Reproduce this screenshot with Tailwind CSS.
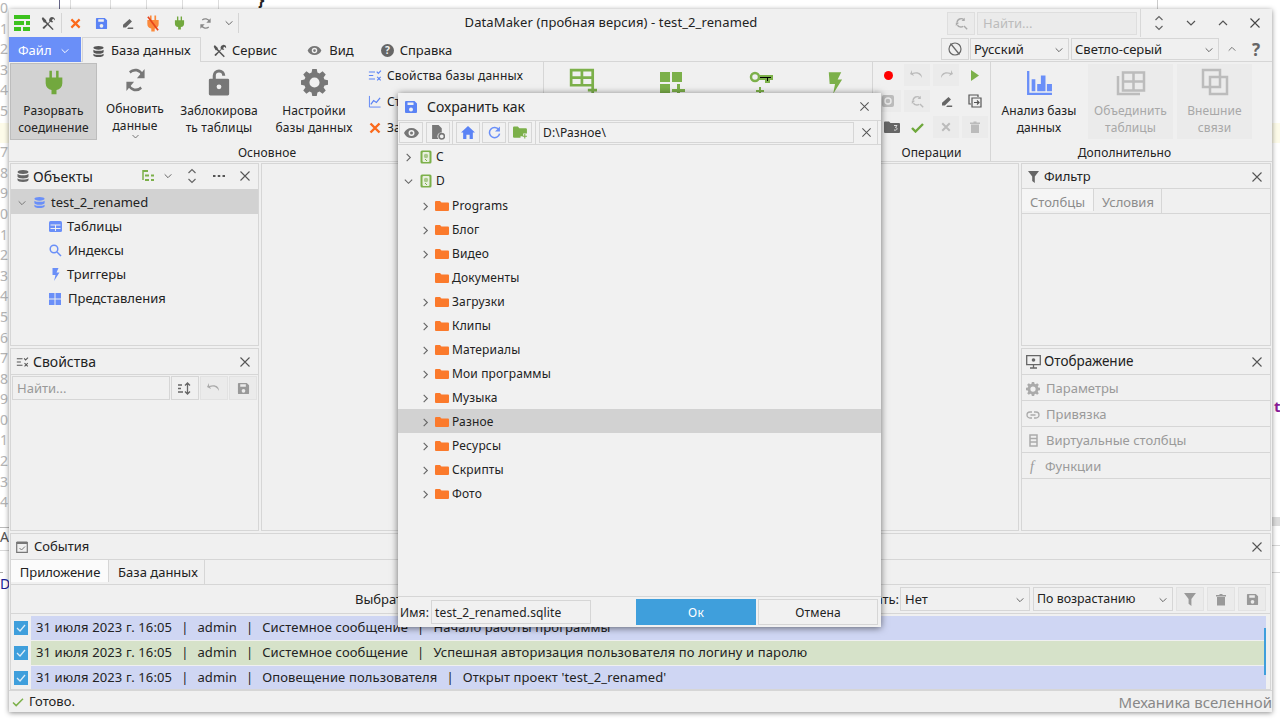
<!DOCTYPE html>
<html lang="en">
<head>
    <meta charset="UTF-8">
    <title>DataMaker</title>
    <script src="https://cdn.jsdelivr.net/npm/@tailwindcss/browser@4"></script>
</head>
<body class="w-[1280px] h-[720px] overflow-hidden bg-white relative font-['Noto_Sans',sans-serif] text-[13px] text-[#222]">

    <!-- icon sprites -->
    <svg class="hidden">
        <symbol id="x" viewBox="0 0 12 12"><path d="M1.500 1.500l9 9M10.500 1.500l-9 9" stroke="currentColor" stroke-width="1.100" fill="none"/></symbol>
        <symbol id="down" viewBox="0 0 12 12"><path d="M2 4l4 4 4-4" stroke="currentColor" stroke-width="1.200" fill="none"/></symbol>
        <symbol id="right" viewBox="0 0 12 12"><path d="M4 2l4 4-4 4" stroke="currentColor" stroke-width="1.200" fill="none"/></symbol>
        <symbol id="up" viewBox="0 0 12 12"><path d="M2 8l4-4 4 4" stroke="currentColor" stroke-width="1.200" fill="none"/></symbol>
        <symbol id="updown" viewBox="0 0 12 18"><path d="M2.500 6l3.500-3.500 3.500 3.500M2.500 12l3.500 3.500 3.500-3.500" stroke="currentColor" stroke-width="1.200" fill="none"/></symbol>
        <symbol id="save" viewBox="0 0 14 14"><path fill="currentColor" fill-rule="evenodd" d="M1 2a1 1 0 0 1 1-1h8.500L13 3.500V12a1 1 0 0 1-1 1H2a1 1 0 0 1-1-1zM3.500 2.500V5h6V2.500zM7 7.500a2 2 0 1 0 0 4 2 2 0 0 0 0-4z"/></symbol>
        <symbol id="db" viewBox="0 0 14 14"><path fill="currentColor" d="M7 1c3 0 5.500.8 5.500 2S10 5 7 5 1.500 4.200 1.500 3 4 1 7 1zM1.500 5c1 1 3 1.300 5.500 1.300S11.500 6 12.500 5v2.500C12.500 8.700 10 9.500 7 9.500s-5.500-.8-5.500-2zM1.500 9.300c1 1 3 1.300 5.500 1.300s4.500-.3 5.500-1.300V11c0 1.200-2.500 2-5.500 2s-5.500-.8-5.500-2z"/></symbol>
        <symbol id="tools" viewBox="0 0 16 16"><path fill="currentColor" d="M2 1l3.500 3.500v1.200L13.500 14 12.300 15 4.300 7H3L0.800 3zM11.500 1a3.500 3.500 0 0 1 3.500 3.800L13 3 11.500 4.500 13 6.500a3.500 3.500 0 0 1-3-.4L3.500 13.500a1.200 1.200 0 0 1-1.600-1.600L9 6a3.500 3.500 0 0 1 2.500-5z"/></symbol>
        <symbol id="plug" viewBox="0 0 24 30"><path fill="currentColor" d="M6.500 1h3v8h5V1h3v8H22v7a8 8 0 0 1-7 7.900V29H9v-5.100A8 8 0 0 1 2 16V9h4.500z"/></symbol>
        <symbol id="sync" viewBox="0 0 24 24" preserveAspectRatio="none"><path fill="none" stroke="currentColor" stroke-width="2.400" d="M19.500 8A9 9 0 0 0 6 5.500M4.500 16A9 9 0 0 0 18 18.500"/><path fill="currentColor" d="M21.500 2.500v8h-8zM2.500 21.500v-8h8z"/></symbol>
        <symbol id="pencil" viewBox="0 0 16 16"><path fill="currentColor" d="M10.500 2.500l3 3-7.500 7.500H2.500v-3.500zM9 13h6v1.800H7.500z"/></symbol>
        <symbol id="eye" viewBox="0 0 16 12"><path fill="currentColor" fill-rule="evenodd" d="M8 1c3.500 0 6.300 2 7.500 5-1.200 3-4 5-7.500 5S1.700 9 .5 6C1.700 3 4.500 1 8 1zm0 2a3 3 0 1 0 0 6 3 3 0 0 0 0-6zm0 1.500a1.500 1.500 0 1 1 0 3 1.500 1.500 0 0 1 0-3z"/></symbol>
        <symbol id="gear" viewBox="0 0 24 24"><path fill="currentColor" fill-rule="evenodd" d="M10 1h4l.6 3.100 1.900.8L19.200 3 22 5.800l-1.900 2.700.8 1.900L24 11v4l-3.100.6-.8 1.900L22 20.200 19.200 23l-2.700-1.900-1.900.8L14 25h-4l-.6-3.100-1.900-.8L4.800 23 2 20.200l1.900-2.700-.8-1.900L0 15v-4l3.100-.6.8-1.900L2 5.800 4.800 3l2.700 1.900 1.900-.8zM12 8.500a4.500 4.500 0 1 0 0 9 4.500 4.500 0 0 0 0-9z" transform="translate(0 -1)"/></symbol>
        <symbol id="props" viewBox="0 0 16 12"><path d="M1 2h7M1 6h5M1 10h7" stroke="currentColor" stroke-width="1.300" fill="none"/><path d="M10 1.500l1.800 2 3-3M10.500 7.500l4 4M14.500 7.500l-4 4" stroke="currentColor" stroke-width="1.300" fill="none"/></symbol>
        <symbol id="folder" viewBox="0 0 14 12"><path fill="#fb7a2c" d="M0 2a1 1 0 0 1 1-1h4l1.500 1.500H13a1 1 0 0 1 1 1V10a1 1 0 0 1-1 1H1a1 1 0 0 1-1-1z"/></symbol>
        <symbol id="hdd" viewBox="0 0 12 14"><rect x=".5" y=".5" width="11" height="13" rx="1.500" fill="#7cb04a"/><rect x="2.500" y="2" width="7" height="10" rx="1" fill="#e9f0df"/><circle cx="6" cy="6" r="2.200" fill="#a9c98a"/><path d="M5 9l2 2" stroke="#7cb04a"/></symbol>
    </svg>

    <!-- what shows behind the main window -->
    <div class="absolute left-0 top-0 w-[9px] h-[515px] text-[14px] leading-[20.6px] text-[#b5b5b5] overflow-hidden">
        <div class="-mt-[2px] flex flex-col">
            <span>0</span><span>1</span><span>2</span><span>3</span><span>4</span><span>5</span><span>6</span><span>7</span><span>8</span><span>9</span><span>0</span><span>1</span><span>2</span><span>3</span><span>4</span><span>5</span><span>6</span><span>7</span><span>8</span><span>9</span><span>0</span><span>1</span><span>2</span><span>3</span><span>4</span>
        </div>
    </div>
    <div class="absolute left-0 top-[123px] w-[9px] h-[20px] bg-[#fdfbe9]"></div>
    <div class="absolute right-0 top-[123px] w-[8px] h-[20px] bg-[#fdfbe9]"></div>
    <div class="absolute right-0 top-[517px] w-[8px] h-[9px] bg-[#dcdcdc]"></div>
    <div class="absolute right-0 top-[545px] w-[8px] h-px bg-[#d8d8d8]"></div>
    <div class="absolute right-0 top-[572px] w-[8px] h-px bg-[#d8d8d8]"></div>
    <div class="absolute left-0 top-[527px] w-[9px] h-px bg-[#bbb]"></div>
    <div class="absolute left-0 top-[550px] w-[9px] h-px bg-[#d8d8d8]"></div>
    <div class="absolute left-0 top-[572px] w-[3px] h-px bg-[#aaa]"></div>
    <span class="absolute left-0 top-[526px] w-[9px] overflow-hidden text-[14px] text-[#555]">Ap</span>
    <span class="absolute left-[258px] -top-[12px] text-[16px] text-[#222] font-bold">}</span>
    <span class="absolute left-[1274px] top-[395px] text-[15px] font-bold text-[#8a1c96]">t</span>
    <span class="absolute left-0 top-[573px] w-[9px] overflow-hidden text-[14px] text-[#1c1c96]">Da</span>
    <div class="absolute left-[59px] top-0 w-px h-[9px] bg-[#668]"></div>
    <div class="absolute left-[70px] top-0 w-px h-[9px] bg-[#ddd]"></div>
    <div class="absolute left-[110px] top-0 w-px h-[9px] bg-[#ddd]"></div>
    <div class="absolute left-[146px] top-0 w-px h-[9px] bg-[#ddd]"></div>
    <div class="absolute left-[182px] top-0 w-px h-[9px] bg-[#ddd]"></div>
    <div class="absolute left-[218px] top-0 w-px h-[9px] bg-[#ddd]"></div>
    <div class="absolute left-[1157px] top-0 w-px h-[9px] bg-[#ccc]"></div>

    <!-- main window -->
    <div class="absolute left-[9px] top-[9px] w-[1263px] h-[703px] bg-[#f0f0f0] shadow-[0_1px_5px_rgba(0,0,0,0.45)] flex flex-col">

        <!-- title row -->
        <div class="h-[28px] flex items-center relative shrink-0">
            <div class="flex items-center h-full pl-[5px]">
                <svg class="w-[16px] h-[16px] -mt-[1px]" viewBox="0 0 16 16"><path fill="#3cc21e" d="M0 0h16v4H0zM0 6h10v4H0zM12 6h4v4h-4zM0 12h7v4H0zM9 12h7v4H9z"/></svg>
                <svg class="w-[15px] h-[15px] ml-[11px] text-[#555]"><use href="#tools"/></svg>
                <div class="w-px h-[20px] bg-[#d5d5d5] ml-[5px]"></div>
                <svg class="w-[11px] h-[11px] ml-[8px] text-[#fb6a1c]" viewBox="0 0 12 12"><path d="M1.500 1.500l9 9M10.500 1.500l-9 9" stroke="currentColor" stroke-width="2.400"/></svg>
                <svg class="w-[13px] h-[13px] ml-[14px] text-[#5b83f5]"><use href="#save"/></svg>
                <svg class="w-[13px] h-[13px] ml-[13px] text-[#666]"><use href="#pencil"/></svg>
                <svg class="w-[14px] h-[17px] ml-[12px] text-[#fb8a3c]" viewBox="0 0 24 30"><use href="#plug"/><path d="M3 3l18 24" stroke="#e8451c" stroke-width="3"/></svg>
                <svg class="w-[11px] h-[14px] ml-[14px] text-[#72a83e]"><use href="#plug"/></svg>
                <svg class="w-[13px] h-[13px] ml-[14px] text-[#888]"><use href="#sync"/></svg>
                <svg class="w-[10px] h-[10px] ml-[12px] text-[#666]"><use href="#down"/></svg>
                <div class="w-px h-[20px] bg-[#d5d5d5] ml-[4px]"></div>
            </div>
            <div class="absolute left-0 right-0 top-0 h-full flex items-center justify-center tracking-[0.1px] pr-[59px] pointer-events-none">DataMaker (пробная версия) - test_2_renamed</div>
            <div class="ml-auto flex items-center h-full relative">
                <div class="w-[28px] h-[23px] bg-[#ebebeb] border border-[#dedede] flex items-center justify-center text-[#aaa]">
                    <svg class="w-[13px] h-[13px]" viewBox="0 0 16 16"><path d="M11 3.500A5 5 0 0 0 2.500 7M3 10a5 5 0 0 0 7 1.500M11 11l4 4" stroke="currentColor" stroke-width="1.700" fill="none"/><path fill="currentColor" d="M12 1v4H8zM1 11V7h4z"/></svg>
                </div>
                <div class="ml-[2px] w-[160px] h-[23px] bg-[#ebebeb] border border-[#dedede] px-[5px] text-[#bcbcbc] leading-[21px]">Найти...</div>
                <div class="w-px h-full bg-[#d8d8d8] ml-[3px]"></div>
                <svg class="w-[12px] h-[18px] ml-[12px] text-[#666]"><use href="#updown"/></svg>
                <svg class="w-[12px] h-[12px] ml-[20px] text-[#555]"><use href="#down"/></svg>
                <svg class="w-[12px] h-[12px] ml-[20px] text-[#555]"><use href="#up"/></svg>
                <svg class="w-[12px] h-[12px] ml-[20px] mr-[11px] text-[#444]"><use href="#x"/></svg>
            </div>
        </div>

        <!-- menu row -->
        <div class="h-[25px] flex items-start relative shrink-0 border-b border-[#d6d6d6]">
            <div class="w-[72px] h-[25px] bg-[#6a8ff8] text-white flex items-center pl-[9px] pt-[2px]">Файл<svg class="w-[10px] h-[10px] ml-[8px]"><use href="#down"/></svg></div>
            <div class="ml-[1px] w-[119px] h-[25px] bg-[#f0f0f0] border border-b-0 border-[#d6d6d6] flex items-center pl-[9px] pt-[2px] z-10">
                <svg class="w-[13px] h-[13px] text-[#555] mr-[6px]"><use href="#db"/></svg>База данных
            </div>
            <div class="h-[25px] flex items-center pl-[12px] pt-[2px]"><svg class="w-[14px] h-[14px] text-[#555] mr-[5px]"><use href="#tools"/></svg>Сервис</div>
            <div class="h-[25px] flex items-center pl-[30px] pt-[2px]"><svg class="w-[15px] h-[11px] text-[#777] mr-[7px]"><use href="#eye"/></svg>Вид</div>
            <div class="h-[25px] flex items-center pl-[27px] pt-[2px]">
                <svg class="w-[13px] h-[13px] mr-[6px]" viewBox="0 0 14 14"><circle cx="7" cy="7" r="7" fill="#666"/><text x="7" y="11" font-size="11" font-weight="700" fill="#f0f0f0" text-anchor="middle">?</text></svg>Справка
            </div>
            <div class="ml-auto flex items-center h-[22px] mt-[1px]">
                <div class="w-[28px] h-[22px] border border-[#d6d6d6] flex items-center justify-center text-[#666]">
                    <svg class="w-[14px] h-[14px]" viewBox="0 0 14 14"><circle cx="7" cy="7" r="6" stroke="currentColor" fill="none" stroke-width="1.200"/><path d="M2.500 1.500l9 11" stroke="currentColor" stroke-width="1.200"/></svg>
                </div>
                <div class="ml-[1px] w-[99px] h-[22px] border border-[#d6d6d6] pl-[3px] pr-[4px] pt-[1px] flex items-center justify-between">Русский<svg class="w-[10px] h-[10px] text-[#666]"><use href="#down"/></svg></div>
                <div class="ml-[2px] w-[148px] h-[22px] border border-[#d6d6d6] pl-[3px] pr-[4px] pt-[1px] flex items-center justify-between">Светло-серый<svg class="w-[10px] h-[10px] text-[#666]"><use href="#down"/></svg></div>
                <svg class="w-[10px] h-[10px] ml-[8px] text-[#777]"><use href="#up"/></svg>
                <span class="ml-[14px] mr-[11px] w-[10px] text-center text-[17px] font-bold text-[#666] leading-none">?</span>
            </div>
        </div>

        <!-- ribbon -->
        <div class="h-[100px] flex shrink-0 border-b border-[#d6d6d6] leading-[17px] text-center text-[12px] tracking-[0.1px] relative">
            <!-- Основное -->
            <div class="w-[535px] border-r border-[#d6d6d6] flex flex-col">
                <div class="flex h-[81px] pl-[1px] pt-[1px] whitespace-nowrap">
                    <div class="w-[87px] h-[77px] bg-[#d2d2d2] border border-[#bdbdbd] flex flex-col items-center">
                        <svg class="w-[20px] h-[25px] mt-[6px] text-[#72a83e] mb-[7px]"><use href="#plug"/></svg>
                        <span>Разорвать</span><span>соединение</span>
                    </div>
                    <div class="w-[76px] flex flex-col items-center">
                        <svg class="w-[23px] h-[28px] mt-[3px] text-[#777] mb-[6px]"><use href="#sync"/></svg>
                        <span>Обновить</span><span>данные</span>
                        <svg class="w-[9px] h-[9px] text-[#666] -mt-[2px]"><use href="#down"/></svg>
                    </div>
                    <div class="w-[92px] flex flex-col items-center">
                        <svg class="w-[24px] h-[29px] mt-[5px] mb-[5px] text-[#777]" viewBox="0 0 24 30"><path fill="currentColor" fill-rule="evenodd" d="M5.500 11V8a6.500 6.500 0 0 1 13 0h-3.200a3.300 3.300 0 0 0-6.600 0v3H21a1.500 1.500 0 0 1 1.500 1.500V27a1.500 1.500 0 0 1-1.500 1.500H3A1.500 1.500 0 0 1 1.500 27V12.500A1.500 1.500 0 0 1 3 11zM12 17a2.500 2.500 0 1 0 0 5 2.500 2.500 0 0 0 0-5z"/></svg>
                        <span>Заблокирова</span><span>ть таблицы</span>
                    </div>
                    <div class="w-[98px] flex flex-col items-center">
                        <svg class="w-[27px] h-[27px] mt-[6px] mb-[6px] text-[#777]"><use href="#gear"/></svg>
                        <span>Настройки</span><span>базы данных</span>
                    </div>
                    <div class="flex flex-col pl-[5px] pt-[4px] gap-[9px] text-left tracking-[0.15px]">
                        <div class="flex items-center gap-[5px] h-[17px]"><svg class="w-[14px] h-[11px] text-[#5b83f5]"><use href="#props"/></svg>Свойства базы данных</div>
                        <div class="flex items-center gap-[5px] h-[17px]"><svg class="w-[14px] h-[13px] text-[#5b83f5]" viewBox="0 0 14 14"><path d="M1 1v12h12" stroke="currentColor" fill="none"/><path d="M2.500 10l3-4 3 2 4-5" stroke="currentColor" stroke-width="1.300" fill="none"/></svg>Статистика</div>
                        <div class="flex items-center gap-[5px] h-[17px]"><svg class="w-[12px] h-[12px] text-[#fb6a1c] ml-[1px] mr-[1px]" viewBox="0 0 12 12"><path d="M1.500 1.500l9 9M10.500 1.500l-9 9" stroke="currentColor" stroke-width="2.400"/></svg>Закрыть</div>
                    </div>
                </div>
                <div class="h-[18px] pt-[1px] pr-[18px]">Основное</div>
            </div>
            <!-- green create buttons, mostly hidden by the dialog -->
            <div class="w-[328px] flex items-start text-[#7cb04a]">
                <svg class="w-[28px] h-[28px] ml-[25px] mt-[6px]" viewBox="0 0 26 26"><path fill="none" stroke="currentColor" stroke-width="2.500" d="M2 2h20v14H2zM2 9h20M12 2v14"/><path d="M22 16v9M17.500 20.500h9" stroke="currentColor" stroke-width="2.500"/></svg>
                <svg class="w-[26px] h-[26px] ml-[62px] mt-[9px]" viewBox="0 0 26 26"><path fill="currentColor" d="M1 1h10v10H1zM13 1h10v10H13zM1 13h10v10H1zM18 13h3v5h5v3h-5v5h-3v-5h-5v-3h5z"/></svg>
                <svg class="w-[26px] h-[26px] ml-[63px] mt-[9px]" viewBox="0 0 26 26"><circle cx="7" cy="6" r="4" fill="none" stroke="currentColor" stroke-width="2.500"/><path d="M11 5h13v3h-3v3h-3V8h-7zM12 16v8M8 20h8" stroke="currentColor" stroke-width="2"/></svg>
                <svg class="w-[16px] h-[26px] ml-[53px] mt-[8px]" viewBox="0 0 18 26"><path fill="currentColor" d="M2 1h14l-4 8h5L7 25l2-11H3z"/></svg>
            </div>
            <!-- Операции -->
            <div class="w-[119px] border-l border-r border-[#d6d6d6] flex flex-col">
                <div class="grid grid-cols-[26px_26px_26px_26px] grid-rows-[22px_22px_22px] h-[81px] pt-[2px] pl-[2px] gap-x-[3px] gap-y-[4px]">
                    <div class="flex items-center justify-center"><span class="w-[9px] h-[9px] rounded-full bg-[#f00]"></span></div>
                    <div class="bg-[#ebebeb] flex items-center justify-center text-[#bbb]"><svg class="w-[14px] h-[10px]" viewBox="0 0 14 10"><path d="M2 3v-3l-2 4 4 2-1-2c4-1.500 7 0 9 4 0-5-4-7-10-5z" fill="currentColor"/></svg></div>
                    <div class="bg-[#ebebeb] flex items-center justify-center text-[#bbb]"><svg class="w-[14px] h-[10px] -scale-x-100" viewBox="0 0 14 10"><path d="M2 3v-3l-2 4 4 2-1-2c4-1.500 7 0 9 4 0-5-4-7-10-5z" fill="currentColor"/></svg></div>
                    <div class="flex items-center justify-center"><svg class="w-[10px] h-[11px]" viewBox="0 0 10 11"><path d="M1 0l8 5.500L1 11z" fill="#7cb04a"/></svg></div>
                    <div class="bg-[#ebebeb] flex items-center justify-center"><svg class="w-[14px] h-[14px]" viewBox="0 0 14 14"><rect x="1" y="1" width="12" height="12" rx="2" fill="#bbb"/><circle cx="7" cy="7" r="3" fill="none" stroke="#ebebeb" stroke-width="1.500"/></svg></div>
                    <div class="bg-[#ebebeb] flex items-center justify-center text-[#bbb]"><svg class="w-[13px] h-[13px]" viewBox="0 0 16 16"><path d="M11 3.500A5 5 0 0 0 2.500 7M3 10a5 5 0 0 0 7 1.500M11 11l4 4" stroke="currentColor" stroke-width="1.700" fill="none"/><path fill="currentColor" d="M12 1v4H8zM1 11V7h4z"/></svg></div>
                    <div class="flex items-center justify-center text-[#666]"><svg class="w-[13px] h-[13px]"><use href="#pencil"/></svg></div>
                    <div class="flex items-center justify-center text-[#555]"><svg class="w-[14px] h-[14px]" viewBox="0 0 14 14"><path d="M3 10H1V1h9v2M4 4h9v9H4zM6 8.500h5M9 6.500l2 2-2 2" stroke="currentColor" stroke-width="1.200" fill="none"/></svg></div>
                    <div class="flex items-center justify-center"><svg class="w-[16px] h-[12px] ml-[8px]" viewBox="0 0 16 12"><path fill="#666" d="M0 1.500a1 1 0 0 1 1-1h4L6.500 2H15a1 1 0 0 1 1 1v8a1 1 0 0 1-1 1H1a1 1 0 0 1-1-1z"/><path d="M10 4.500h3l-1.500 2c1 0 1.500.5 1.500 1.300S12.300 9.500 10 9" stroke="#ddd" fill="none"/></svg></div>
                    <div class="flex items-center justify-center"><svg class="w-[13px] h-[11px]" viewBox="0 0 13 11"><path d="M1 6l3.500 3.500L12 2" stroke="#6fa83c" stroke-width="2.400" fill="none"/></svg></div>
                    <div class="bg-[#ebebeb] flex items-center justify-center"><svg class="w-[10px] h-[10px]" viewBox="0 0 12 12"><path d="M1.500 1.500l9 9M10.500 1.500l-9 9" stroke="#bbb" stroke-width="2.400"/></svg></div>
                    <div class="bg-[#ebebeb] flex items-center justify-center"><svg class="w-[10px] h-[12px]" viewBox="0 0 10 12"><path fill="#bbb" d="M0 1.500h3.500V.500h3v1H10V3H0zM1 3.500h8V12H1z"/></svg></div>
                </div>
                <div class="h-[18px] pt-[1px]">Операции</div>
            </div>
            <!-- Дополнительно -->
            <div class="flex-1 flex flex-col">
                <div class="flex h-[81px] pl-[1px] pt-[2px]">
                    <div class="w-[94px] flex flex-col items-center">
                        <svg class="w-[27px] h-[24px] mt-[7px] mb-[7px]" viewBox="0 0 27 26"><path fill="#6a8ff8" d="M0 0h2.500v23.500H27V26H0zM5 9h4v13H5zM11 14h4v8h-4zM15 5h5v17h-5zM21.500 14H27v8h-5.500z"/></svg>
                        <span>Анализ базы</span><span>данных</span>
                    </div>
                    <div class="w-[85px] ml-[2px] h-[75px] bg-[#ebebeb] flex flex-col items-center text-[#a8a8a8]">
                        <svg class="w-[30px] h-[26px] mt-[6px] mb-[6px]" viewBox="0 0 30 26"><path d="M7 2.500h21v18H7zM7 11.500h21M17.500 2.500v18M2 6v18h22" stroke="#bcbcbc" stroke-width="2.500" fill="none"/></svg>
                        <span>Объединить</span><span>таблицы</span>
                    </div>
                    <div class="w-[75px] ml-[4px] h-[75px] bg-[#ebebeb] flex flex-col items-center text-[#a8a8a8]">
                        <svg class="w-[28px] h-[28px] mt-[4px] mb-[6px]" viewBox="0 0 28 28"><path d="M2 2h17v17H2zM9 9h17v17H9z" stroke="#bcbcbc" stroke-width="2.500" fill="none"/></svg>
                        <span>Внешние</span><span>связи</span>
                    </div>
                </div>
                <div class="h-[18px] pt-[1px] pr-[14px]">Дополнительно</div>
            </div>
        </div>

        <!-- panels -->
        <div class="h-[369px] flex shrink-0 gap-[2px] pl-[1px] pt-[1px]">
            <!-- left column -->
            <div class="w-[249px] flex flex-col gap-[2px]">
                <div class="h-[183px] border border-[#d6d6d6]">
                    <div class="h-[25px] flex items-center pl-[5px] pr-[7px] pb-[1px]">
                        <svg class="w-[14px] h-[14px] text-[#666] mr-[3px]"><use href="#db"/></svg>
                        <span class="text-[14px]">Объекты</span>
                        <svg class="w-[12px] h-[12px] ml-auto" viewBox="0 0 12 12"><path fill="none" stroke="#7cb04a" stroke-width="1.500" d="M1 0v10"/><path fill="#7cb04a" d="M1 0h5v2H1zM3 4.500h4v2H3zM9 4.500h3v2H9zM3 9h4v2H3zM9 9h3v2H9z"/></svg>
                        <svg class="w-[10px] h-[10px] ml-[9px] text-[#666]"><use href="#down"/></svg>
                        <svg class="w-[12px] h-[18px] ml-[13px] text-[#666]"><use href="#updown"/></svg>
                        <svg class="w-[12px] h-[4px] ml-[15px] text-[#555]" viewBox="0 0 12 4"><path fill="currentColor" d="M0 1h2.500v2H0zM4.750 1h2.500v2h-2.500zM9.500 1H12v2H9.500z"/></svg>
                        <svg class="w-[12px] h-[12px] ml-[14px] text-[#555]"><use href="#x"/></svg>
                    </div>
                    <div class="h-[25px] bg-[#d2d2d2] flex items-center pl-[6px] pt-[2px]">
                        <svg class="w-[10px] h-[10px] text-[#777]"><use href="#down"/></svg>
                        <svg class="w-[13px] h-[13px] text-[#6a8ff8] ml-[6px] mr-[5px]"><use href="#db"/></svg>
                        <span>test_2_renamed</span>
                    </div>
                    <div class="h-[24px] flex items-center pl-[38px] pt-[1px]"><svg class="w-[13px] h-[11px] mr-[5px]" viewBox="0 0 13 11"><rect width="13" height="11" rx="1.500" fill="#6a8ff8"/><path d="M1.500 4h10M1.500 7.500h10M6.500 4v6" stroke="#f0f0f0"/></svg>Таблицы</div>
                    <div class="h-[24px] flex items-center pl-[38px] pt-[1px]"><svg class="w-[13px] h-[13px] mr-[6px]" viewBox="0 0 13 13"><circle cx="5" cy="5" r="3.800" fill="none" stroke="#6a8ff8" stroke-width="1.500"/><path d="M8 8l4 4" stroke="#6a8ff8" stroke-width="1.500"/></svg>Индексы</div>
                    <div class="h-[24px] flex items-center pl-[38px] pt-[1px]"><svg class="w-[13px] h-[13px] mr-[5px]" viewBox="0 0 13 13"><path fill="#6a8ff8" d="M3.500 0h6L7.500 4.500h3L5 13l1.500-6H3.500z"/></svg>Триггеры</div>
                    <div class="h-[24px] flex items-center pl-[38px] pt-[1px]"><svg class="w-[12px] h-[12px] mr-[7px]" viewBox="0 0 12 12"><path fill="#6a8ff8" d="M0 0h5.500v5.500H0zM6.500 0H12v5.500H6.500zM0 6.500h5.500V12H0zM6.500 6.500H12V12H6.500z"/></svg>Представления</div>
                </div>
                <div class="h-[183px] border border-[#d6d6d6]">
                    <div class="h-[26px] flex items-center pl-[5px] pr-[7px] border-b border-[#d6d6d6]">
                        <svg class="w-[13px] h-[10px] text-[#555] mr-[4px]"><use href="#props"/></svg>
                        <span class="text-[14px]">Свойства</span>
                        <svg class="w-[12px] h-[12px] ml-auto text-[#555]"><use href="#x"/></svg>
                    </div>
                    <div class="flex items-center pt-[1px] pl-[1px]">
                        <div class="w-[158px] h-[24px] border border-[#d6d6d6] px-[4px] leading-[22px] text-[#999]">Найти...</div>
                        <div class="ml-[1px] w-[28px] h-[24px] border border-[#d6d6d6] flex items-center justify-center text-[#666]"><svg class="w-[14px] h-[13px]" viewBox="0 0 14 13"><path d="M0 3h4M0 6.500h3M0 10h5M9.500 1v11M7 3.500L9.500 1 12 3.500M7 9.500L9.500 12 12 9.500" stroke="currentColor" stroke-width="1.300" fill="none"/></svg></div>
                        <div class="ml-[1px] w-[28px] h-[24px] bg-[#ebebeb] border border-[#e2e2e2] flex items-center justify-center text-[#aaa]"><svg class="w-[14px] h-[10px]" viewBox="0 0 14 10"><path d="M2 3v-3l-2 4 4 2-1-2c4-1.500 7 0 9 4 0-5-4-7-10-5z" fill="currentColor"/></svg></div>
                        <div class="ml-[1px] w-[28px] h-[24px] bg-[#ebebeb] border border-[#e2e2e2] flex items-center justify-center text-[#999]"><svg class="w-[13px] h-[13px]"><use href="#save"/></svg></div>
                    </div>
                </div>
            </div>
            <!-- center -->
            <div class="w-[758px] border border-[#d6d6d6] h-[368px]"></div>
            <!-- right column -->
            <div class="w-[250px] flex flex-col gap-[2px]">
                <div class="h-[183px] border border-[#d6d6d6]">
                    <div class="h-[25px] flex items-center pl-[6px] pr-[7px] pt-[1px] border-b border-[#d6d6d6]">
                        <svg class="w-[11px] h-[12px] text-[#666] mr-[5px]" viewBox="0 0 11 12"><path fill="currentColor" d="M0 0h11L6.800 5.500V12L4.200 10V5.500z"/></svg>
                        <span>Фильтр</span>
                        <svg class="w-[12px] h-[12px] ml-auto text-[#555]"><use href="#x"/></svg>
                    </div>
                    <div class="h-[25px] flex border-b border-[#d6d6d6] text-[#8c8c8c]">
                        <div class="w-[72px] h-[22px] bg-[#f5f5f5] border-r border-[#d6d6d6] text-center leading-[26px]">Столбцы</div>
                        <div class="w-[68px] h-[24px] border-r border-[#d6d6d6] text-center leading-[26px] pl-[1px]">Условия</div>
                    </div>
                </div>
                <div class="h-[183px] border border-[#d6d6d6] text-[#9a9a9a]">
                    <div class="h-[26px] flex items-center pl-[4px] pr-[7px] border-b border-[#d6d6d6] text-[#222]">
                        <svg class="w-[15px] h-[14px] text-[#666] mr-[3px]" viewBox="0 0 15 14"><path d="M.7.700h13.600v9H.7zM7.500 9.700v3M4 13h7" stroke="currentColor" stroke-width="1.300" fill="none"/><circle cx="7.500" cy="5" r="1.800" fill="currentColor"/></svg>
                        <span class="text-[13.5px]">Отображение</span>
                        <svg class="w-[12px] h-[12px] ml-auto text-[#555]"><use href="#x"/></svg>
                    </div>
                    <div class="h-[26px] flex items-center pl-[4px] pt-[2px] border-b border-[#d6d6d6]"><svg class="w-[14px] h-[14px] mr-[6px] text-[#aaa]"><use href="#gear"/></svg>Параметры</div>
                    <div class="h-[26px] flex items-center pl-[4px] pt-[2px] border-b border-[#d6d6d6]"><svg class="w-[14px] h-[8px] mr-[6px]" viewBox="0 0 13 8"><path d="M5.500 1H3.500a3 3 0 0 0 0 6h2M7.500 1h2a3 3 0 0 1 0 6h-2M4 4h5" stroke="#aaa" stroke-width="1.300" fill="none"/></svg>Привязка</div>
                    <div class="h-[26px] flex items-center pl-[7px] pt-[2px] border-b border-[#d6d6d6]"><svg class="w-[9px] h-[13px] mr-[8px]" viewBox="0 0 9 13"><path d="M1 1h7v11H1zM1 4.500h7M1 8h7" stroke="#aaa" stroke-width="1.500" fill="none"/></svg>Виртуальные столбцы</div>
                    <div class="h-[26px] flex items-center pl-[8px] pt-[2px] border-b border-[#d6d6d6]"><span class="w-[15px] italic font-['Liberation_Serif',serif] text-[14px]">f</span>Функции</div>
                </div>
            </div>
        </div>

        <!-- events -->
        <div class="mt-[2px] mx-[1px] h-[157px] border border-[#d6d6d6] flex flex-col shrink-0">
            <div class="h-[26px] flex items-center pl-[5px] pr-[7px] border-b border-[#d6d6d6] shrink-0">
                <svg class="w-[12px] h-[13px] mr-[6px]" viewBox="0 0 12 13"><path d="M.7 2.500h10.600v9.800H.7z" fill="none" stroke="#777" stroke-width="1.200"/><path fill="#777" d="M.7 1.500h10.600V4H.7z"/><path d="M3.500 8l2 2L9 6.500" stroke="#777" fill="none"/></svg>
                <span>События</span>
                <svg class="w-[12px] h-[12px] ml-auto text-[#555]"><use href="#x"/></svg>
            </div>
            <div class="h-[25px] flex border-b border-[#d6d6d6] shrink-0">
                <div class="w-[98px] h-[22px] bg-[#fbfbfb] border-r border-[#d6d6d6] text-center leading-[24px] pl-[1px]">Приложение</div>
                <div class="w-[96px] h-[24px] border-r border-[#d6d6d6] text-center leading-[24px] pl-[3px]">База данных</div>
            </div>
            <div class="h-[29px] flex items-center border-b border-[#d6d6d6] shrink-0">
                <span class="ml-[344px] pt-[1px]">Выбрать тип:</span>
                <span class="ml-auto mr-[1px] pt-[1px]">Сортировать:</span>
                <div class="w-[130px] h-[24px] border border-[#d6d6d6] px-[4px] pt-[1px] flex items-center justify-between">Нет<svg class="w-[10px] h-[10px] text-[#666]"><use href="#down"/></svg></div>
                <div class="ml-[3px] w-[140px] h-[24px] border border-[#d6d6d6] px-[3px] pt-[1px] flex items-center justify-between text-[12.4px]">По возрастанию<svg class="w-[10px] h-[10px] text-[#666] mr-[1px]"><use href="#down"/></svg></div>
                <div class="ml-[3px] w-[28px] h-[24px] bg-[#ebebeb] border border-[#e2e2e2] flex items-center justify-center"><svg class="w-[12px] h-[13px] text-[#999]" viewBox="0 0 11 12"><path fill="currentColor" d="M0 0h11L6.800 5.500V12L4.200 10V5.500z"/></svg></div>
                <div class="ml-[3px] w-[28px] h-[24px] bg-[#ebebeb] border border-[#e2e2e2] flex items-center justify-center"><svg class="w-[10px] h-[13px]" viewBox="0 0 10 12"><path fill="#999" d="M0 1.500h3.500V.500h3v1H10V3H0zM1 3.500h8V12H1z"/></svg></div>
                <div class="ml-[3px] mr-[4px] w-[28px] h-[24px] bg-[#ebebeb] border border-[#e2e2e2] flex items-center justify-center text-[#999]"><svg class="w-[13px] h-[13px]"><use href="#save"/></svg></div>
            </div>
            <div class="flex-1 relative pt-[2px] pl-[3px] pr-[4px] flex flex-col gap-[1px] tracking-[0.12px]">
                <div class="h-[24px] flex items-center">
                    <span class="w-[14px] h-[14px] bg-[#3f9fdc] flex items-center justify-center"><svg class="w-[10px] h-[8px]" viewBox="0 0 10 8"><path d="M1 4l3 3 5-6" stroke="#dcecf8" stroke-width="1.300" fill="none"/></svg></span>
                    <div class="ml-[3px] flex-1 h-full bg-[#cfd6f3] flex items-center pl-[5px] gap-[9px]"><span>31 июля 2023 г. 16:05</span><span>|</span><span>admin</span><span>|</span><span>Системное сообщение</span><span>|</span><span>Начало работы программы</span></div>
                </div>
                <div class="h-[24px] flex items-center">
                    <span class="w-[14px] h-[14px] bg-[#3f9fdc] flex items-center justify-center"><svg class="w-[10px] h-[8px]" viewBox="0 0 10 8"><path d="M1 4l3 3 5-6" stroke="#dcecf8" stroke-width="1.300" fill="none"/></svg></span>
                    <div class="ml-[3px] flex-1 h-full bg-[#d6e2c9] flex items-center pl-[5px] gap-[9px]"><span>31 июля 2023 г. 16:05</span><span>|</span><span>admin</span><span>|</span><span>Системное сообщение</span><span>|</span><span>Успешная авторизация пользователя по логину и паролю</span></div>
                </div>
                <div class="h-[23px] flex items-center">
                    <span class="w-[14px] h-[14px] bg-[#3f9fdc] flex items-center justify-center"><svg class="w-[10px] h-[8px]" viewBox="0 0 10 8"><path d="M1 4l3 3 5-6" stroke="#dcecf8" stroke-width="1.300" fill="none"/></svg></span>
                    <div class="ml-[3px] flex-1 h-full bg-[#cfd6f3] flex items-center pl-[5px] gap-[9px]"><span>31 июля 2023 г. 16:05</span><span>|</span><span>admin</span><span>|</span><span>Оповещение пользователя</span><span>|</span><span>Открыт проект 'test_2_renamed'</span></div>
                </div>
                <div class="absolute right-[4px] top-[14px] w-[2px] h-[47px] bg-[#3f9fdc]"></div>
            </div>
        </div>

        <!-- status bar -->
        <div class="h-[22px] shrink-0 flex items-center pl-[3px] border-t border-[#d6d6d6] leading-none">
            <svg class="w-[12px] h-[10px] mr-[5px]" viewBox="0 0 13 11"><path d="M1 6l3.500 3.500L12 2" stroke="#7cb04a" stroke-width="1.600" fill="none"/></svg>
            Готово.
            <span class="ml-auto text-[15px] text-[#888] mt-[1px]">Механика вселенной</span>
        </div>
    </div>

    <!-- save dialog -->
    <div class="absolute left-[398px] top-[93px] w-[483px] h-[534px] bg-[#f1f1f1] shadow-[0_1px_7px_rgba(0,0,0,0.55)] flex flex-col text-[12px] tracking-[0.15px]">
        <div class="h-[28px] flex items-center pl-[6px] pr-[11px] border-b border-[#d6d6d6] shrink-0">
            <svg class="w-[14px] h-[14px] text-[#5b83f5] mr-[9px]"><use href="#save"/></svg>
            <span class="text-[14px] tracking-normal">Сохранить как</span>
            <svg class="w-[11px] h-[11px] ml-auto text-[#555]"><use href="#x"/></svg>
        </div>
        <div class="h-[24px] flex items-center border-b border-[#d6d6d6] shrink-0 pl-[1px]">
            <div class="w-[24px] h-[21px] border border-[#d6d6d6] flex items-center justify-center text-[#777]"><svg class="w-[17px] h-[12px]"><use href="#eye"/></svg></div>
            <div class="ml-[3px] w-[24px] h-[21px] border border-[#d6d6d6] flex items-center justify-center"><svg class="w-[14px] h-[15px]" viewBox="0 0 13 14"><path fill="#777" d="M1 0h6l3 3v4a3.500 3.500 0 0 0-3 6H1z"/><circle cx="10" cy="10.500" r="2.500" fill="none" stroke="#777" stroke-width="1.500"/></svg></div>
            <div class="w-px h-full bg-[#d6d6d6] ml-[2px]"></div>
            <div class="ml-[3px] w-[24px] h-[21px] border border-[#d6d6d6] flex items-center justify-center"><svg class="w-[14px] h-[13px]" viewBox="0 0 13 12"><path fill="#5b83f5" d="M6.500 0L13 6h-2v6H8V8H5v4H2V6H0z"/></svg></div>
            <div class="ml-[2px] w-[24px] h-[21px] border border-[#d6d6d6] flex items-center justify-center text-[#6a8ff8]"><svg class="w-[13px] h-[13px]" viewBox="0 0 12 12"><path d="M10 3.500A4.700 4.700 0 1 0 10.700 7" stroke="currentColor" stroke-width="1.400" fill="none"/><path fill="currentColor" d="M11 .500v4.500H6.500z"/></svg></div>
            <div class="ml-[2px] w-[24px] h-[21px] border border-[#d6d6d6] flex items-center justify-center"><svg class="w-[15px] h-[13px]" viewBox="0 0 14 12"><path fill="#7cb04a" d="M0 1.500a1 1 0 0 1 1-1h3.500L6 2h6a1 1 0 0 1 1 1v4H9.500v2.500H7V11H1a1 1 0 0 1-1-1z"/><path d="M11 7.500v4M9 9.500h4" stroke="#7cb04a"/></svg></div>
            <div class="w-px h-full bg-[#d6d6d6] ml-[3px]"></div>
            <div class="ml-[3px] w-[315px] h-[21px] border border-[#d6d6d6] px-[3px] leading-[19px]">D:\Разное\</div>
            <svg class="w-[11px] h-[11px] ml-[7px] text-[#555]"><use href="#x"/></svg>
            <div class="w-px h-full bg-[#d6d6d6] ml-[5px]"></div>
        </div>
        <div class="flex-1 flex flex-col [&>div]:pt-[2px]">
            <div class="h-[24px] flex items-center pl-[5px] !pt-0"><svg class="w-[11px] h-[11px] text-[#666]"><use href="#right"/></svg><svg class="w-[12px] h-[14px] ml-[6px] mr-[4px]"><use href="#hdd"/></svg>C</div>
            <div class="h-[24px] flex items-center pl-[5px] !pt-0"><svg class="w-[11px] h-[11px] text-[#666]"><use href="#down"/></svg><svg class="w-[12px] h-[14px] ml-[6px] mr-[4px]"><use href="#hdd"/></svg>D</div>
            <div class="h-[24px] flex items-center pl-[22px]"><svg class="w-[11px] h-[11px] text-[#666]"><use href="#right"/></svg><svg class="w-[14px] h-[12px] ml-[4px] mr-[3px]"><use href="#folder"/></svg>Programs</div>
            <div class="h-[24px] flex items-center pl-[22px]"><svg class="w-[11px] h-[11px] text-[#666]"><use href="#right"/></svg><svg class="w-[14px] h-[12px] ml-[4px] mr-[3px]"><use href="#folder"/></svg>Блог</div>
            <div class="h-[24px] flex items-center pl-[22px]"><svg class="w-[11px] h-[11px] text-[#666]"><use href="#right"/></svg><svg class="w-[14px] h-[12px] ml-[4px] mr-[3px]"><use href="#folder"/></svg>Видео</div>
            <div class="h-[24px] flex items-center pl-[37px]"><svg class="w-[14px] h-[12px] mr-[3px]"><use href="#folder"/></svg>Документы</div>
            <div class="h-[24px] flex items-center pl-[22px]"><svg class="w-[11px] h-[11px] text-[#666]"><use href="#right"/></svg><svg class="w-[14px] h-[12px] ml-[4px] mr-[3px]"><use href="#folder"/></svg>Загрузки</div>
            <div class="h-[24px] flex items-center pl-[22px]"><svg class="w-[11px] h-[11px] text-[#666]"><use href="#right"/></svg><svg class="w-[14px] h-[12px] ml-[4px] mr-[3px]"><use href="#folder"/></svg>Клипы</div>
            <div class="h-[24px] flex items-center pl-[22px]"><svg class="w-[11px] h-[11px] text-[#666]"><use href="#right"/></svg><svg class="w-[14px] h-[12px] ml-[4px] mr-[3px]"><use href="#folder"/></svg>Материалы</div>
            <div class="h-[24px] flex items-center pl-[22px]"><svg class="w-[11px] h-[11px] text-[#666]"><use href="#right"/></svg><svg class="w-[14px] h-[12px] ml-[4px] mr-[3px]"><use href="#folder"/></svg>Мои программы</div>
            <div class="h-[24px] flex items-center pl-[22px]"><svg class="w-[11px] h-[11px] text-[#666]"><use href="#right"/></svg><svg class="w-[14px] h-[12px] ml-[4px] mr-[3px]"><use href="#folder"/></svg>Музыка</div>
            <div class="h-[24px] flex items-center pl-[22px] bg-[#d2d2d2]"><svg class="w-[11px] h-[11px] text-[#666]"><use href="#right"/></svg><svg class="w-[14px] h-[12px] ml-[4px] mr-[3px]"><use href="#folder"/></svg>Разное</div>
            <div class="h-[24px] flex items-center pl-[22px]"><svg class="w-[11px] h-[11px] text-[#666]"><use href="#right"/></svg><svg class="w-[14px] h-[12px] ml-[4px] mr-[3px]"><use href="#folder"/></svg>Ресурсы</div>
            <div class="h-[24px] flex items-center pl-[22px]"><svg class="w-[11px] h-[11px] text-[#666]"><use href="#right"/></svg><svg class="w-[14px] h-[12px] ml-[4px] mr-[3px]"><use href="#folder"/></svg>Скрипты</div>
            <div class="h-[24px] flex items-center pl-[22px]"><svg class="w-[11px] h-[11px] text-[#666]"><use href="#right"/></svg><svg class="w-[14px] h-[12px] ml-[4px] mr-[3px]"><use href="#folder"/></svg>Фото</div>
        </div>
        <div class="h-[31px] flex items-center pl-[2px] shrink-0 border-t border-[#d6d6d6]">
            <span class="w-[29px] pt-[1px]">Имя:</span>
            <div class="ml-[2px] w-[160px] h-[24px] border border-[#d6d6d6] px-[3px] leading-[24px]">test_2_renamed.sqlite</div>
            <div class="ml-[45px] w-[120px] h-[26px] bg-[#3f9fdc] text-white flex items-center justify-center pt-[2px]">Ок</div>
            <div class="ml-[2px] w-[120px] h-[26px] border border-[#d6d6d6] flex items-center justify-center pt-[2px]">Отмена</div>
        </div>
    </div>
</body>
</html>
